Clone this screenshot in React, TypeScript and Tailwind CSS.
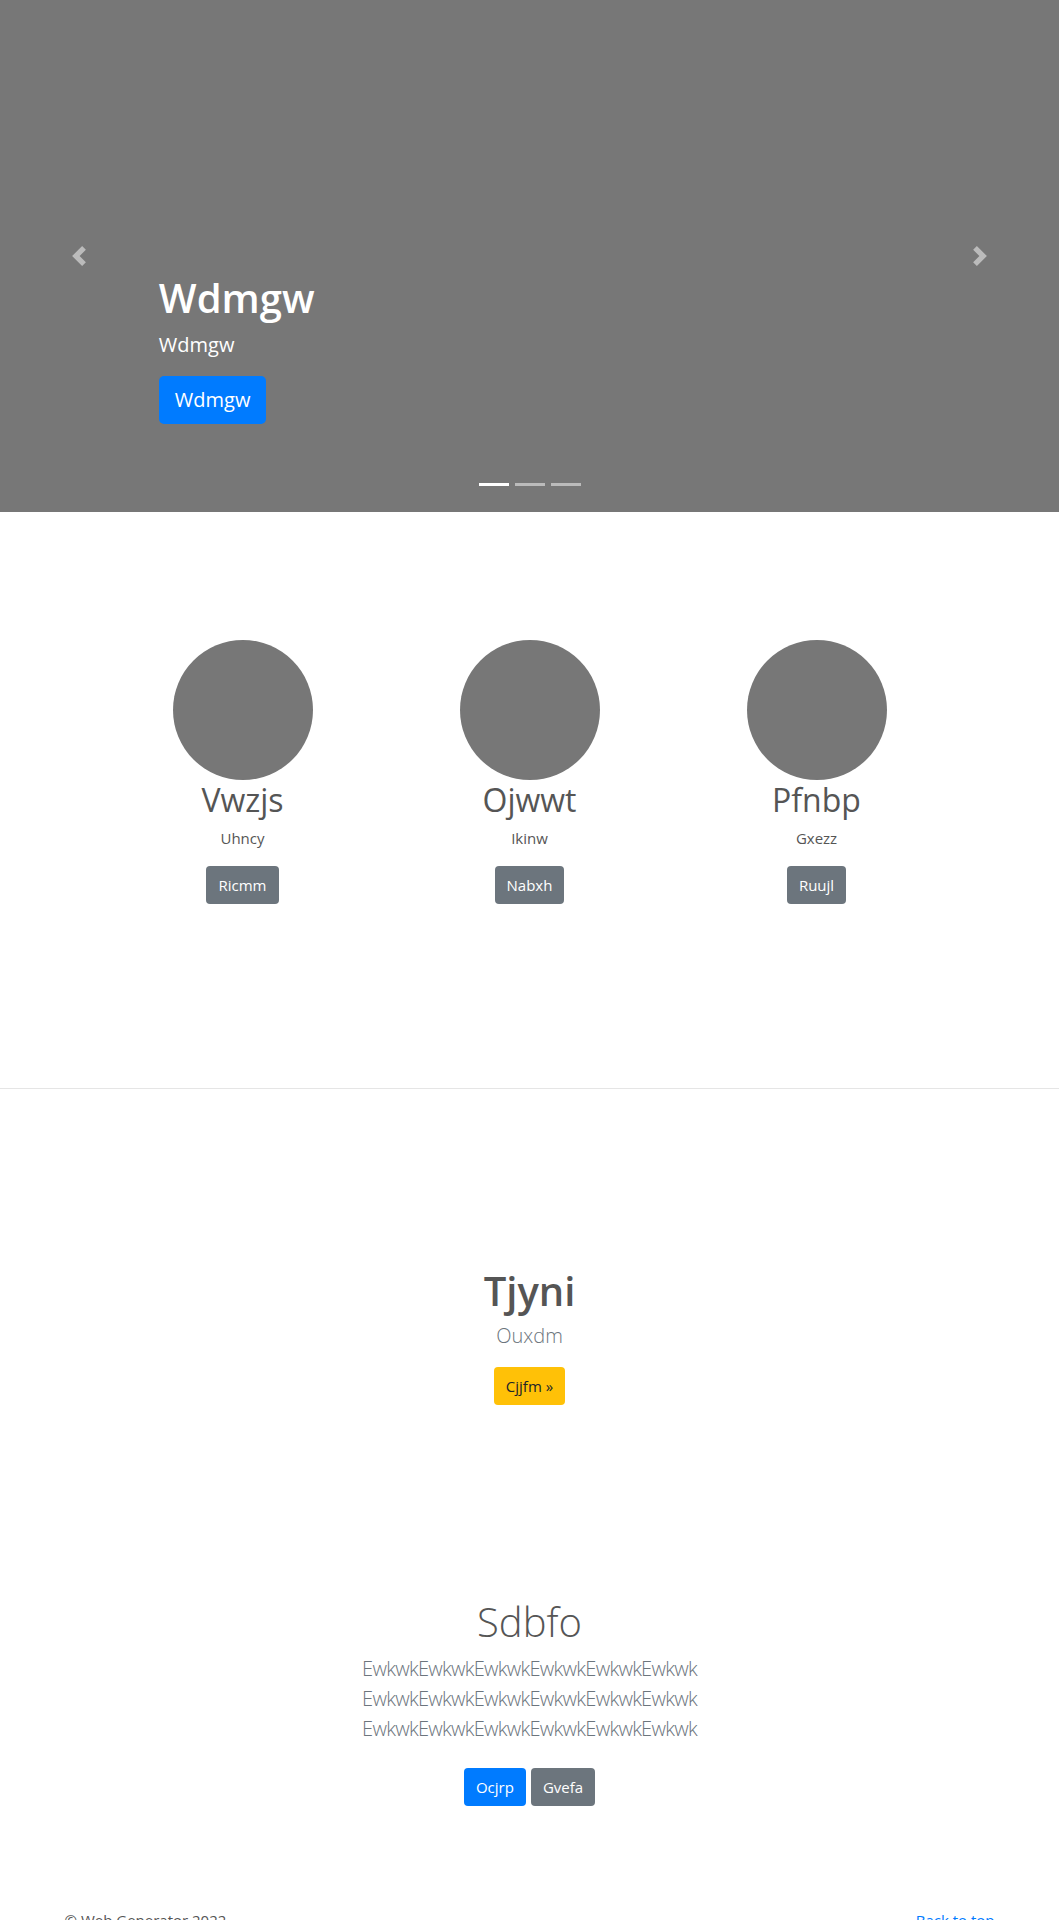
import React from "react";

const font = { fontFamily: '"Open Sans", "Noto Sans", "Liberation Sans", sans-serif' };

function PrevIcon() {
  return (
    <svg width="20" height="20" viewBox="0 0 8 8" fill="#fff">
      <path d="M5.25 0l-4 4 4 4 1.5-1.5L4.25 4l2.5-2.5L5.25 0z" />
    </svg>
  );
}
function NextIcon() {
  return (
    <svg width="20" height="20" viewBox="0 0 8 8" fill="#fff">
      <path d="M2.75 0l-1.5 1.5L3.75 4l-2.5 2.5L2.75 8l4-4-4-4z" />
    </svg>
  );
}

const people = [
  { name: "Vwzjs", sub: "Uhncy", btn: "Ricmm" },
  { name: "Ojwwt", sub: "Ikinw", btn: "Nabxh" },
  { name: "Pfnbp", sub: "Gxezz", btn: "Ruujl" },
];

export default function App() {
  const line = "EwkwkEwkwkEwkwkEwkwkEwkwkEwkwk";
  return (
    <div className="w-[1059px] bg-white text-[#555] overflow-hidden" style={font}>
      {/* Hero */}
      <section className="relative h-[512px] bg-[#777]">
        <div className="absolute left-0 top-0 bottom-0 w-[15%] flex items-center justify-center opacity-50">
          <PrevIcon />
        </div>
        <div className="absolute right-0 top-0 bottom-0 w-[15%] flex items-center justify-center opacity-50">
          <NextIcon />
        </div>
        <div className="absolute left-[15%] right-[15%] bottom-[48px] pt-5 pb-5 text-white">
          <h1 className="text-[40px] leading-[48px] font-semibold mb-2">Wdmgw</h1>
          <p className="text-[20px] leading-[30px] mb-4">Wdmgw</p>
          <p className="mb-[20px]">
            <span className="inline-block bg-[#007bff] text-white text-[20px] leading-[30px] px-4 py-[9px] rounded-[5px]">
              Wdmgw
            </span>
          </p>
        </div>
        <div className="absolute left-0 right-0 bottom-[26px] flex justify-center gap-[6px]">
          <span className="block w-[30px] h-[3px] bg-white" />
          <span className="block w-[30px] h-[3px] bg-white/50" />
          <span className="block w-[30px] h-[3px] bg-white/50" />
        </div>
      </section>

      {/* Marketing */}
      <section className="pt-[128px] pb-[184px] flex justify-center">
        <div className="grid grid-cols-[287px_287px_287px]">
          {people.map((p) => (
            <div key={p.name} className="flex flex-col items-center text-center">
              <div className="w-[140px] h-[140px] rounded-full bg-[#777]" />
              <h2 className="text-[32px] leading-[38px] font-normal mt-[1px] mb-2 text-[#555]">{p.name}</h2>
              <p className="text-[15px] leading-[23px] mb-4 text-[#555]">{p.sub}</p>
              <span className="inline-block bg-[#6c757d] text-white text-[15px] leading-[24px] px-3 py-[7px] rounded-[4px]">
                {p.btn}
              </span>
            </div>
          ))}
        </div>
      </section>

      <hr className="border-0 border-t border-[#e5e5e5]" />

      {/* Tjyni */}
      <section className="pt-[178px] flex flex-col items-center text-center">
        <h1 className="text-[40px] leading-[48px] font-semibold mb-[6px] text-[#555]">Tjyni</h1>
        <p className="text-[20px] leading-[30px] font-light mb-4 text-[#6c757d]">Ouxdm</p>
        <span className="inline-block bg-[#ffc107] text-[#212529] text-[15px] leading-[24px] px-3 py-[7px] rounded-[4px]">
          Cjjfm »
        </span>
      </section>

      {/* Sdbfo */}
      <section className="pt-[193px] flex flex-col items-center text-center">
        <h1 className="text-[40px] leading-[48px] font-light mb-2 text-[#555]">Sdbfo</h1>
        <p className="text-[20px] leading-[30px] font-light mb-6 text-[#6c757d] tracking-[-0.7px]">
          <span className="block">{line}</span>
          <span className="block">{line}</span>
          <span className="block">{line}</span>
        </p>
        <div className="flex gap-[5px]">
          <span className="inline-block bg-[#007bff] text-white text-[15px] leading-[24px] px-3 py-[7px] rounded-[4px]">
            Ocjrp
          </span>
          <span className="inline-block bg-[#6c757d] text-white text-[15px] leading-[24px] px-3 py-[7px] rounded-[4px]">
            Gvefa
          </span>
        </div>
      </section>

      {/* Footer */}
      <footer className="mt-[102px] w-[960px] mx-auto px-[15px] flex justify-between text-[15px] leading-[24px] pb-4">
        <p className="text-[#555]">© Web Generator 2022</p>
        <p className="text-[#007bff]">Back to top</p>
      </footer>
    </div>
  );
}
